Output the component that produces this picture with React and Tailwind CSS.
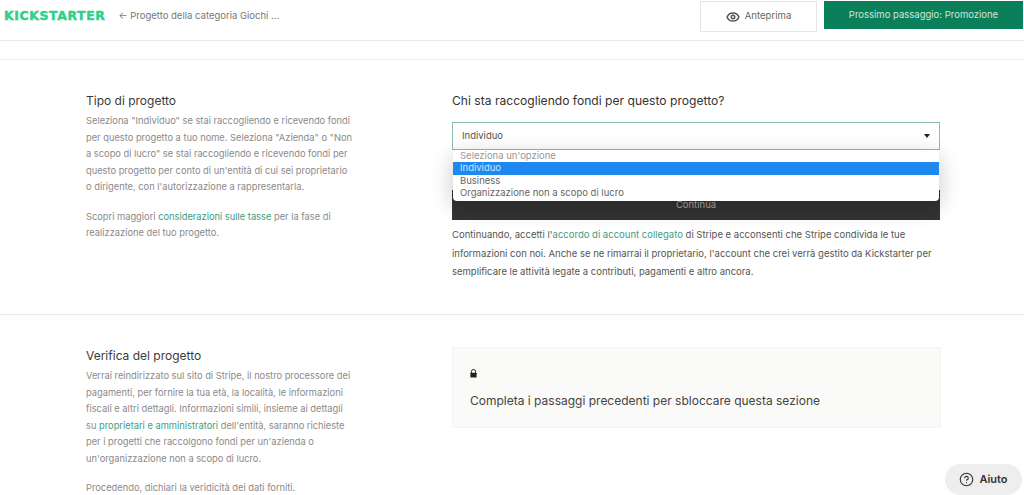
import React from 'react';
import { Eye, CircleHelp } from 'lucide-react';

const Link = ({ children }) => <span className="text-[#3f9c80]">{children}</span>;

const Section = ({ title, children }) => (
  <div className="w-[267px] shrink-0">
    <h2 className="text-[12px] leading-[16px] text-[#3a3a3a]">{title}</h2>
    <div className="mt-[4px] text-[9.3px] leading-[16.5px] text-[#8a8a8a]">{children}</div>
  </div>
);

export default function App() {
  return (
    <div className="relative h-[495px] w-[1024px] overflow-hidden bg-white font-['Inter',sans-serif]">
      {/* Header */}
      <header className="flex h-[41px] items-start justify-between border-b border-[#e9e9e9]">
        <div className="flex h-[32px] items-center pl-[4px]">
          <span className="font-['DejaVu_Sans',sans-serif] text-[12.4px] font-bold tracking-[0.65px] text-[#2fd08c] [-webkit-text-stroke:0.5px_#2fd08c]">
            KICKSTARTER
          </span>
          <span className="ml-[13px] text-[9.5px] text-[#777]">← Progetto della categoria Giochi ...</span>
        </div>
        <div className="mr-[1px] mt-[1px] flex">
          <button className="flex h-[31px] w-[117px] items-center justify-center gap-[5px] border border-[#e6e6e6] text-[9.6px] text-[#666]">
            <Eye size={14} strokeWidth={2.6} className="text-[#555]" />
            Anteprima
          </button>
          <button className="ml-[7px] h-[28px] w-[199px] bg-[#0a7f5a] text-[9.5px] text-[#cfe8dd]">
            Prossimo passaggio: Promozione
          </button>
        </div>
      </header>

      <div className="mt-[18px] border-t border-[#ececec]" />

      {/* Tipo di progetto */}
      <section className="flex h-[255px] border-b border-[#e9e9e9] pl-[86px] pt-[33px]">
        <Section title="Tipo di progetto">
          <p>
            Seleziona "Individuo" se stai raccogliendo e ricevendo fondi per questo progetto a tuo nome. Seleziona
            "Azienda" o "Non a scopo di lucro" se stai raccogliendo e ricevendo fondi per questo progetto per conto di
            un'entità di cui sei proprietario o dirigente, con l'autorizzazione a rappresentarla.
          </p>
          <p className="mt-[13px]">
            Scopri maggiori <Link>considerazioni sulle tasse</Link> per la fase di realizzazione del tuo progetto.
          </p>
        </Section>

        <div className="ml-[99px] w-[488px]">
          <h2 className="text-[12.1px] leading-[16px] text-[#333]">Chi sta raccogliendo fondi per questo progetto?</h2>
          <div className="relative mt-[13px]">
            <div className="flex h-[28px] items-center justify-between border border-[#8fbdb0] pl-[9px] pr-[9px] text-[9.5px] text-[#555]">
              Individuo
              <span className="h-0 w-0 border-x-[3.5px] border-t-[4px] border-x-transparent border-t-[#222]" />
            </div>

            <div className="mb-[6px] mt-[40px] h-[30px] bg-[#333] pt-[8px] text-center text-[9.5px] leading-[14px] text-[#aaa]">
              Continua
            </div>

            {/* Open select menu */}
            <ul className="absolute left-[1px] right-[1px] top-[28px] z-10 rounded-[4px] bg-white pb-[1px] text-[9.5px] leading-[12.4px] text-[#666] shadow-[0_6px_22px_rgba(0,0,0,0.22)]">
              <li className="pl-[7px] text-[#999]">Seleziona un'opzione</li>
              <li className="bg-[#1e88f0] pl-[7px] text-[#cfe4fb]">Individuo</li>
              <li className="pl-[7px]">Business</li>
              <li className="pl-[7px]">Organizzazione non a scopo di lucro</li>
            </ul>
          </div>
          <p className="text-[9.5px] leading-[18.6px] text-[#555]">
            Continuando, accetti l'<Link>accordo di account collegato</Link> di Stripe e acconsenti che Stripe condivida
            le tue informazioni con noi. Anche se ne rimarrai il proprietario, l'account che crei verrà gestito da
            Kickstarter per semplificare le attività legate a contributi, pagamenti e altro ancora.
          </p>
        </div>
      </section>

      {/* Verifica del progetto */}
      <section className="flex pl-[86px] pt-[33px]">
        <Section title="Verifica del progetto">
          <p>
            Verrai reindirizzato sul sito di Stripe, il nostro processore dei pagamenti, per fornire la tua età, la
            località, le informazioni fiscali e altri dettagli. Informazioni simili, insieme ai dettagli su{' '}
            <Link>proprietari e amministratori</Link> dell'entità, saranno richieste per i progetti che raccolgono fondi
            per un'azienda o un'organizzazione non a scopo di lucro.
          </p>
          <p className="mt-[13px]">Procedendo, dichiari la veridicità dei dati forniti.</p>
        </Section>

        <div className="-mt-[1px] ml-[99px] h-[81px] w-[489px] self-start border border-[#f3f3f1] bg-[#fafaf8] pl-[17px] pt-[21px]">
          <svg width="7" height="9" viewBox="0 0 7 9" className="block" aria-hidden="true">
            <path d="M1.4 4V2.6a2.1 2.1 0 0 1 4.2 0V4" fill="none" stroke="#222" strokeWidth="1" />
            <rect x="0.4" y="3.8" width="6.2" height="4.8" rx="0.5" fill="#222" />
          </svg>
          <p className="mt-[15px] text-[12px] leading-[16px] text-[#444]">
            Completa i passaggi precedenti per sbloccare questa sezione
          </p>
        </div>
      </section>

      {/* Help */}
      <button className="absolute bottom-0 right-[2px] flex h-[31px] w-[77px] items-center justify-center gap-[5px] rounded-full bg-[#eeeeee] text-[11px] font-semibold text-[#333]">
        <CircleHelp size={15} strokeWidth={1.8} />
        Aiuto
      </button>
    </div>
  );
}
